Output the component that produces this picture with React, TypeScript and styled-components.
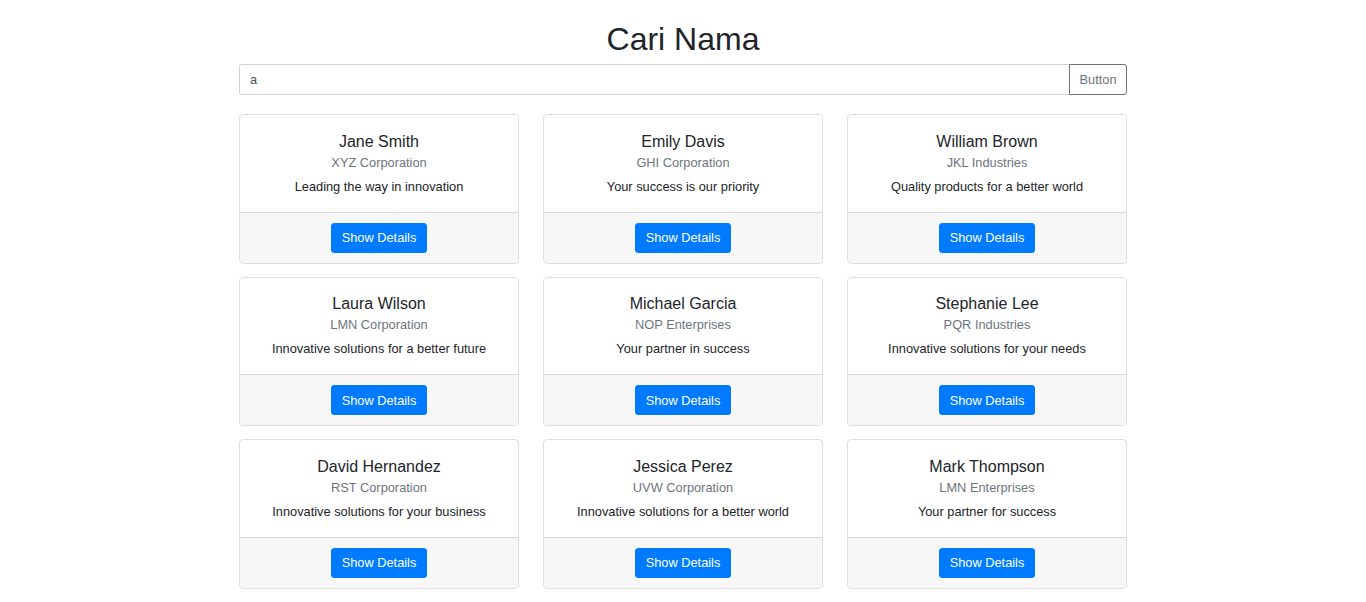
import React from "react";
import styled, { createGlobalStyle } from "styled-components";

const Global = createGlobalStyle`
  html, body { margin: 0; padding: 0; background: #fff; }
  body { font-family: "Liberation Sans", Arial, sans-serif; color: #212529; }
  * { box-sizing: border-box; }
`;

const Page = styled.div`
  width: 888px;
  margin: 0 auto;
  padding-top: 20px;
`;

const Title = styled.h1`
  margin: 0 0 6px;
  font-size: 32px;
  font-weight: 400;
  line-height: 1.2;
  text-align: center;
  color: #212529;
`;

const SearchRow = styled.div`
  display: flex;
  height: 31px;
`;

const SearchInput = styled.input`
  flex: 1;
  min-width: 0;
  height: 100%;
  padding: 0 10px;
  font: 12.8px "Liberation Sans", Arial, sans-serif;
  color: #495057;
  background: #fff;
  border: 1px solid #ced4da;
  border-right: none;
  border-radius: 3px 0 0 3px;
  outline: none;
`;

const SearchButton = styled.button`
  height: 100%;
  width: 58px;
  padding: 0;
  font: 12.8px "Liberation Sans", Arial, sans-serif;
  color: #6c757d;
  background: #fff;
  border: 1px solid #6c757d;
  border-radius: 0 3px 3px 0;
`;

const Grid = styled.div`
  display: grid;
  grid-template-columns: repeat(3, 280px);
  column-gap: 24px;
  row-gap: 13px;
  margin-top: 19px;
`;

const Card = styled.div`
  border: 1px solid rgba(0, 0, 0, 0.125);
  border-radius: 4px;
  overflow: hidden;
  display: flex;
  flex-direction: column;
`;

const Body = styled.div`
  padding: 16.5px 12px 15.5px;
  text-align: center;
  display: flex;
  flex-direction: column;
`;

const Name = styled.div`
  font-size: 16px;
  line-height: 19px;
  color: #212529;
`;

const Company = styled.div`
  margin-top: 2px;
  font-size: 12.8px;
  line-height: 19.5px;
  color: #6c757d;
`;

const Desc = styled.div`
  margin-top: 4.5px;
  font-size: 12.8px;
  line-height: 19.5px;
  color: #212529;
`;

const Footer = styled.div`
  border-top: 1px solid rgba(0, 0, 0, 0.125);
  background: #f7f7f7;
  padding: 10px;
  display: flex;
  justify-content: center;
`;

const DetailsButton = styled.button`
  height: 30px;
  width: 96px;
  padding: 0;
  font: 12.8px "Liberation Sans", Arial, sans-serif;
  color: #fff;
  background: #007bff;
  border: 1px solid #007bff;
  border-radius: 3px;
`;

const people = [
  ["Jane Smith", "XYZ Corporation", "Leading the way in innovation"],
  ["Emily Davis", "GHI Corporation", "Your success is our priority"],
  ["William Brown", "JKL Industries", "Quality products for a better world"],
  ["Laura Wilson", "LMN Corporation", "Innovative solutions for a better future"],
  ["Michael Garcia", "NOP Enterprises", "Your partner in success"],
  ["Stephanie Lee", "PQR Industries", "Innovative solutions for your needs"],
  ["David Hernandez", "RST Corporation", "Innovative solutions for your business"],
  ["Jessica Perez", "UVW Corporation", "Innovative solutions for a better world"],
  ["Mark Thompson", "LMN Enterprises", "Your partner for success"],
];

export default function App() {
  return (
    <>
      <Global />
      <Page>
        <Title>Cari Nama</Title>
        <SearchRow>
          <SearchInput defaultValue="a" />
          <SearchButton>Button</SearchButton>
        </SearchRow>
        <Grid>
          {people.map(([n, c, d]) => (
            <Card key={n}>
              <Body>
                <Name>{n}</Name>
                <Company>{c}</Company>
                <Desc>{d}</Desc>
              </Body>
              <Footer>
                <DetailsButton>Show Details</DetailsButton>
              </Footer>
            </Card>
          ))}
        </Grid>
      </Page>
    </>
  );
}
